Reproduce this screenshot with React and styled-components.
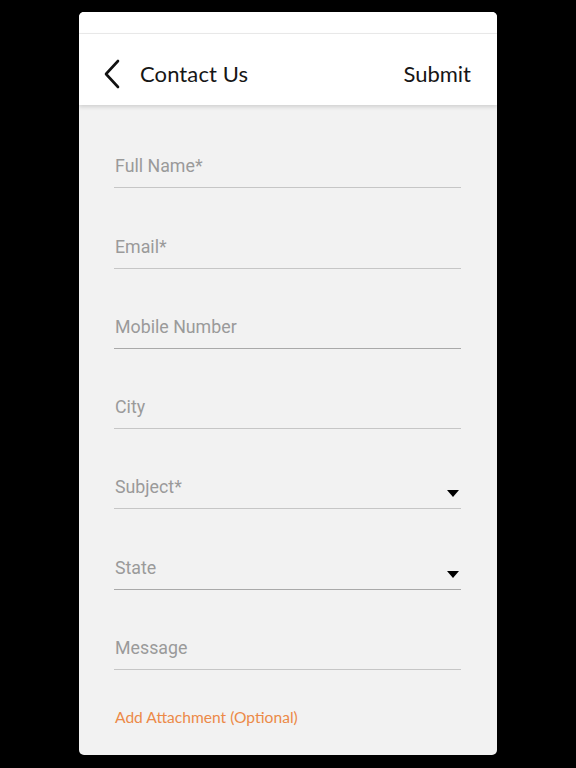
import React from 'react'
import styled, { createGlobalStyle } from 'styled-components'

const GlobalStyle = createGlobalStyle`
  html, body {
    margin: 0;
    padding: 0;
    background: #000000;
  }
`

const Page = styled.div`
  width: 576px;
  height: 768px;
  padding-top: 12px;
  box-sizing: border-box;
  background: #000000;
`

const Card = styled.div`
  margin-left: 79px;
  width: 418px;
  height: 743px;
  background: #f2f2f2;
  border-radius: 5px;
  overflow: hidden;
  display: flex;
  flex-direction: column;
`

const StatusStrip = styled.div`
  height: 21px;
  background: #ffffff;
  border-bottom: 1px solid #ececec;
`

const Header = styled.div`
  height: 71px;
  box-sizing: border-box;
  background: #ffffff;
  display: flex;
  align-items: center;
  padding: 8px 26px 0 24px;
  box-shadow: 0 2px 4px rgba(0, 0, 0, 0.14);
  position: relative;
  z-index: 1;
`

const BackButton = styled.button`
  border: none;
  background: none;
  padding: 0;
  width: 20px;
  height: 32px;
  display: flex;
  align-items: center;
  cursor: pointer;
`

const Title = styled.h1`
  margin: 0 0 0 17px;
  flex: 1;
  font-family: Lato, 'Open Sans', sans-serif;
  font-size: 22px;
  font-weight: 400;
  color: #161616;
  letter-spacing: 0.1px;
`

const SubmitButton = styled.button`
  border: none;
  background: none;
  padding: 0;
  font-family: Lato, 'Open Sans', sans-serif;
  font-size: 22px;
  color: #161616;
  cursor: pointer;
`

const Form = styled.div`
  padding: 3px 36px 0 35px;
  display: flex;
  flex-direction: column;
`

const Field = styled.div`
  height: 80.3px;
  box-sizing: border-box;
  display: flex;
  align-items: flex-end;
  justify-content: space-between;
  padding: 0 2px 11px 1px;
  border-bottom: 1px solid ${p => (p.$dark ? '#a9a9a9' : '#c6c6c6')};
`

const Label = styled.span`
  font-family: Roboto, 'Noto Sans', sans-serif;
  font-size: 17.8px;
  line-height: 20px;
  color: #9a9a9a;
`

const Caret = styled.span`
  width: 0;
  height: 0;
  border-left: 6.5px solid transparent;
  border-right: 6.5px solid transparent;
  border-top: 7px solid #000000;
`

const Attachment = styled.button`
  align-self: flex-start;
  margin-top: 38px;
  margin-left: 1px;
  border: none;
  background: none;
  padding: 0;
  font-family: Lato, 'Open Sans', sans-serif;
  font-size: 15.6px;
  color: #ec8a48;
  cursor: pointer;
`

const fields = [
  { label: 'Full Name*' },
  { label: 'Email*' },
  { label: 'Mobile Number', dark: true },
  { label: 'City' },
  { label: 'Subject*', select: true },
  { label: 'State', select: true, dark: true },
  { label: 'Message' },
]

const App = () => (
  <>
    <GlobalStyle />
    <Page>
      <Card>
        <StatusStrip />
        <Header>
          <BackButton aria-label="Back">
            <svg width="18" height="30" viewBox="0 0 18 30">
              <path d="M15 2 L3 15 L15 28" fill="none" stroke="#111" strokeWidth="2.6" strokeLinecap="round" strokeLinejoin="round" />
            </svg>
          </BackButton>
          <Title>Contact Us</Title>
          <SubmitButton>Submit</SubmitButton>
        </Header>
        <Form>
          {fields.map(f => (
            <Field key={f.label} $dark={f.dark}>
              <Label>{f.label}</Label>
              {f.select && <Caret />}
            </Field>
          ))}
          <Attachment>Add Attachment (Optional)</Attachment>
        </Form>
      </Card>
    </Page>
  </>
)

export default App
